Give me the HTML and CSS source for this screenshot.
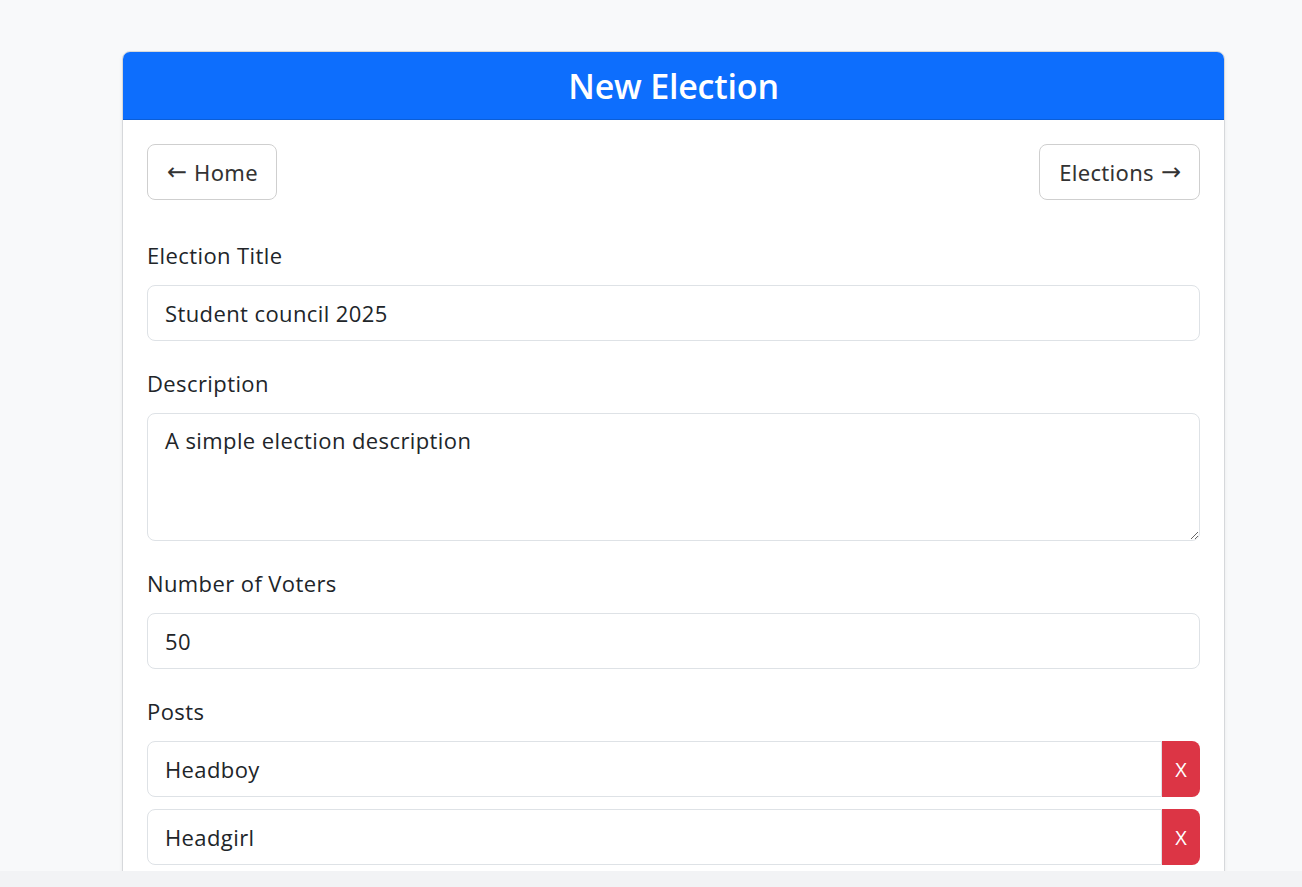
FILE: index.html
```html
<!DOCTYPE html>
<html lang="en">
<head>
<meta charset="utf-8">
<title>New Election</title>
<link rel="stylesheet" href="styles.css">
</head>
<body>
<div class="viewport">
  <main class="page">
    <section class="card">
      <header class="card-header">
        <h1 class="card-title">New Election</h1>
      </header>
      <div class="card-body">
        <nav class="nav-row">
          <a class="btn" href="#"><span class="arrow">←</span> Home</a>
          <a class="btn" href="#">Elections <span class="arrow">→</span></a>
        </nav>
        <form class="form">
          <div class="field">
            <label class="label" for="title">Election Title</label>
            <input class="control" id="title" type="text" value="Student council 2025">
          </div>
          <div class="field">
            <label class="label" for="desc">Description</label>
            <textarea class="control textarea" id="desc">A simple election description</textarea>
          </div>
          <div class="field">
            <label class="label" for="voters">Number of Voters</label>
            <input class="control" id="voters" type="text" value="50">
          </div>
          <div class="field">
            <label class="label">Posts</label>
            <div class="posts">
              <div class="post-row">
                <input class="control post-input" type="text" value="Headboy">
                <button class="remove" type="button">X</button>
              </div>
              <div class="post-row">
                <input class="control post-input" type="text" value="Headgirl">
                <button class="remove" type="button">X</button>
              </div>
              <div class="post-row">
                <input class="control post-input" type="text" value="">
                <button class="remove" type="button">X</button>
              </div>
            </div>
          </div>
        </form>
      </div>
    </section>
  </main>
</div>
<div class="bottom-strip"></div>
</body>
</html>
```

FILE: styles.css
```css
* { box-sizing: border-box; }

html, body {
  margin: 0;
  padding: 0;
}

body {
  background: #f8f9fa;
  font-family: "Open Sans", "Noto Sans", sans-serif;
  color: #212529;
  font-size: 22px;
  line-height: 30px;
}

.viewport {
  height: 871px;
  overflow: hidden;
}

.page {
  padding-top: 51px;
  padding-left: 122px;
  width: 1225px;
}

.card {
  background: #fff;
  border: 1px solid #d6d8db;
  border-radius: 8px;
  box-shadow: 0 2px 4px rgba(0, 0, 0, 0.06);
  overflow: hidden;
}

.card-header {
  background: #0d6efd;
  height: 68px;
  border-bottom: 1px solid #0b5ed7;
  display: flex;
  align-items: center;
  justify-content: center;
}

.card-title {
  margin: 0;
  color: #fff;
  font-size: 34px;
  font-weight: 600;
  line-height: 44px;
  letter-spacing: -0.2px;
}

.card-body {
  padding: 24px 24px 40px;
}

.nav-row {
  display: flex;
  justify-content: space-between;
  margin-bottom: 40px;
}

.btn {
  display: inline-flex;
  align-items: center;
  gap: 7px;
  height: 56px;
  padding: 0 18px 0 19px;
  border: 1px solid #cfcfcf;
  border-radius: 8px;
  background: #fff;
  color: #333;
  font-size: 22px;
  letter-spacing: 0.3px;
  text-decoration: none;
  font-family: "Noto Sans", "Open Sans", sans-serif;
}

.arrow {
  font-family: "DejaVu Sans", sans-serif;
  font-size: 24px;
  letter-spacing: 0;
  line-height: 30px;
}

.form {
  display: flex;
  flex-direction: column;
  gap: 27px;
}

.field {
  display: flex;
  flex-direction: column;
}

.label {
  display: block;
  height: 30px;
  margin-bottom: 15px;
  font-size: 22px;
  line-height: 30px;
  letter-spacing: 0.4px;
  color: #212529;
}

.control {
  display: block;
  width: 100%;
  height: 56px;
  padding: 0 17px;
  border: 1px solid #dee2e6;
  border-radius: 8px;
  background: #fff;
  color: #212529;
  font-family: inherit;
  font-size: 22px;
  line-height: 30px;
  letter-spacing: 0.4px;
  outline: none;
}

.textarea {
  height: 128px;
  padding-top: 11px;
  resize: vertical;
}

.posts {
  display: flex;
  flex-direction: column;
  gap: 12px;
}

.post-row {
  display: flex;
}

.post-input {
  flex: 1;
  border-top-right-radius: 0;
  border-bottom-right-radius: 0;
}

.remove {
  width: 38px;
  height: 56px;
  flex: none;
  border: 0;
  border-radius: 0 8px 8px 0;
  background: #dc3545;
  color: #fff;
  font-family: inherit;
  font-size: 20px;
  padding: 0;
}

.bottom-strip {
  height: 16px;
  background: #f2f3f5;
}
```
